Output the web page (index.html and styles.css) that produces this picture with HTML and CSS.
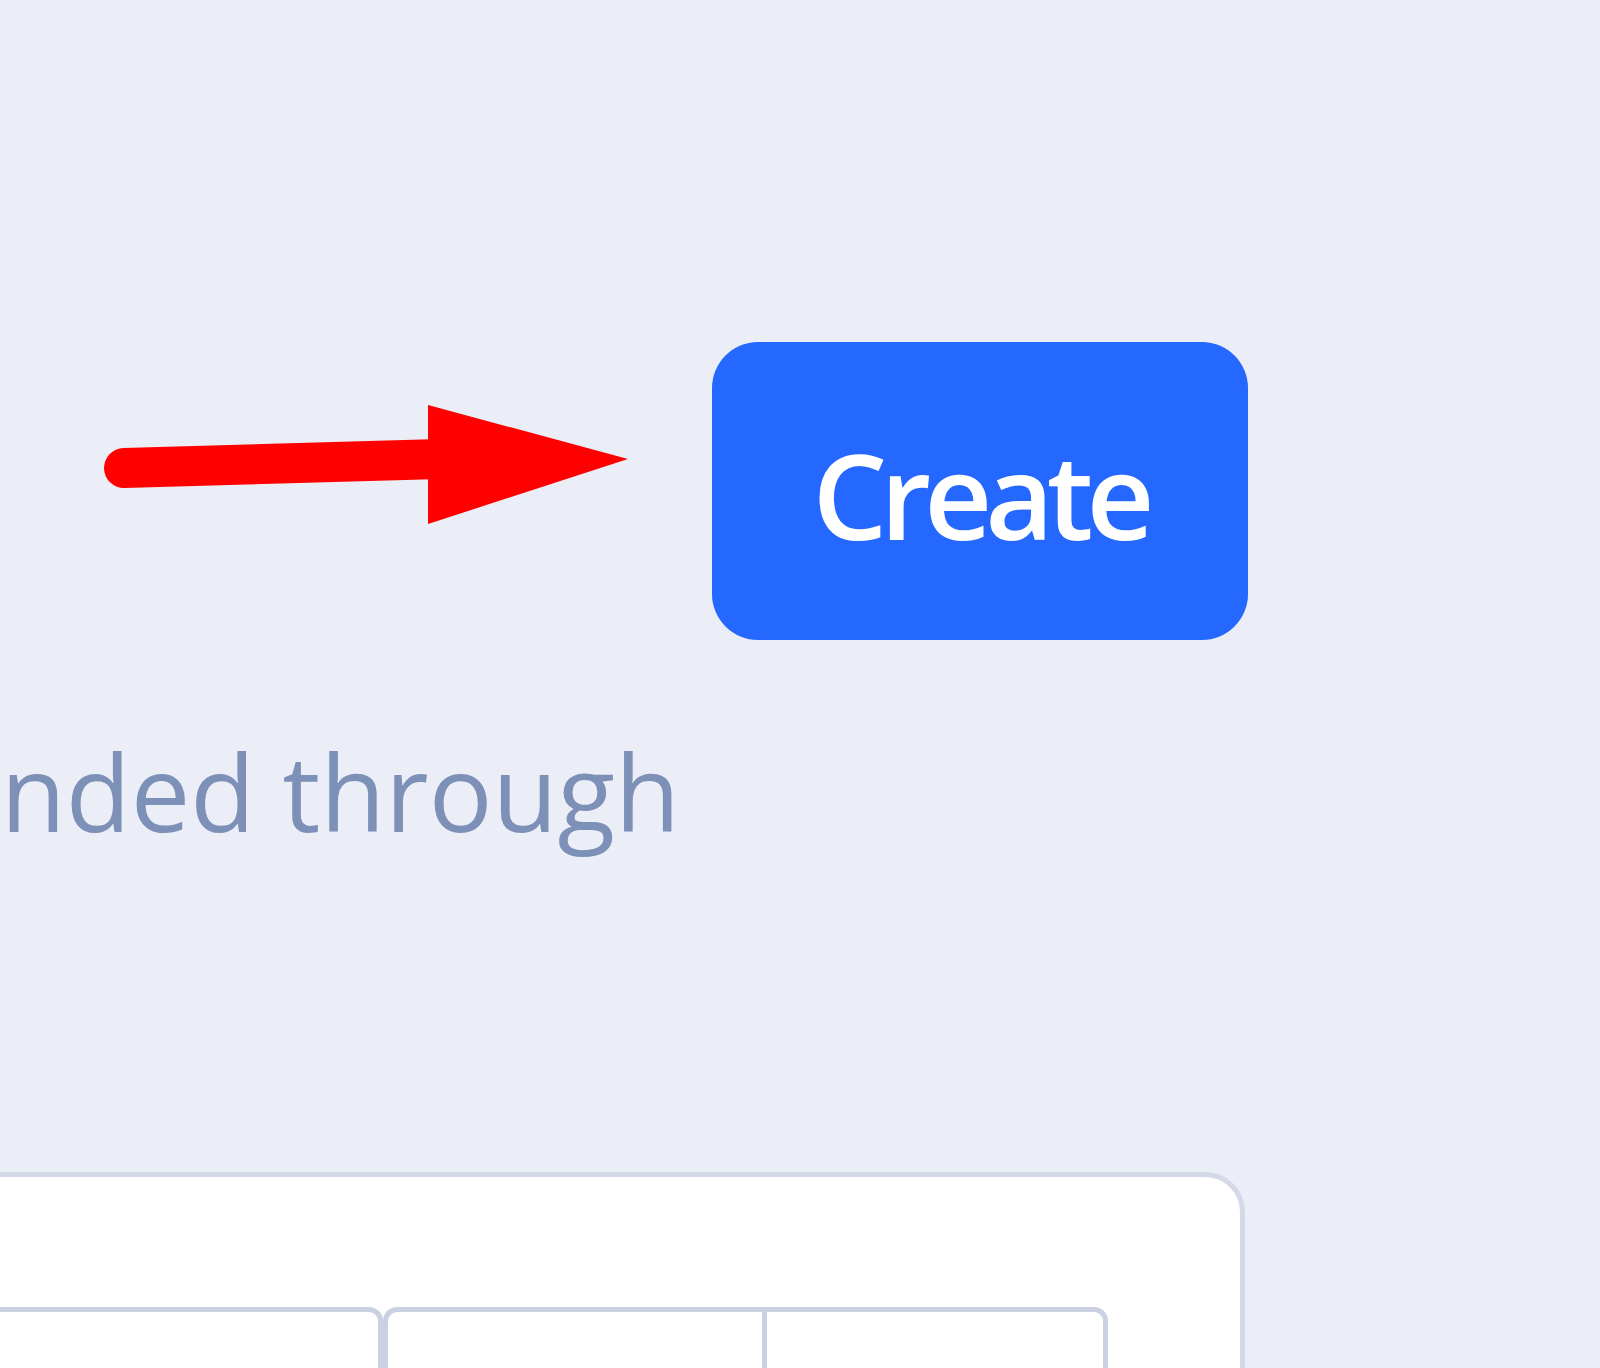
FILE: index.html
```html
<!DOCTYPE html>
<html lang="en">
<head>
<meta charset="utf-8">
<title>Create</title>
<link rel="stylesheet" href="styles.css">
</head>
<body>
<div class="page">
  <div class="top-row">
    <svg class="arrow" width="712" height="298" viewBox="0 0 712 298" aria-hidden="true">
      <line x1="124" y1="126" x2="440" y2="117" stroke="#ff0000" stroke-width="40" stroke-linecap="round"/>
      <polygon points="428,63 628,117 428,182" fill="#ff0000"/>
    </svg>
    <button class="btn-create" type="button">Create</button>
  </div>
  <div class="lead"><span>nded through</span></div>
  <div class="card">
    <div class="field-group">
      <div class="field field-first"></div>
      <div class="field field-split">
        <div class="cell"></div>
        <div class="cell cell-last"></div>
      </div>
    </div>
  </div>
</div>
</body>
</html>
```

FILE: styles.css
```css
html, body {
  margin: 0;
  padding: 0;
}
body {
  width: 1600px;
  height: 1368px;
  overflow: hidden;
  background: #ebeef6;
  font-family: "Open Sans", "Noto Sans", sans-serif;
}
.page {
  width: 1248px;
  display: flex;
  flex-direction: column;
}
.top-row {
  margin-top: 342px;
  height: 298px;
  display: flex;
  align-items: center;
}
.arrow {
  display: block;
  flex: none;
}
.btn-create {
  width: 536px;
  height: 298px;
  flex: none;
  border: none;
  border-radius: 46px;
  background: #2468ff;
  color: #ffffff;
  font-family: "Open Sans", "Noto Sans", sans-serif;
  font-weight: 600;
  font-size: 118px;
  letter-spacing: -7px;
  line-height: 1;
  padding: 8px 0 0 0;
  display: flex;
  align-items: center;
  justify-content: center;
}
.lead {
  margin-top: 79px;
  width: 680px;
  height: 144px;
  display: flex;
  justify-content: flex-end;
  font-size: 106px;
  line-height: 144px;
  color: #7d90b8;
  white-space: nowrap;
}
.card {
  margin-top: 309px;
  margin-left: -60px;
  margin-right: 3px;
  height: 400px;
  background: #ffffff;
  border: 5px solid #d3d9e6;
  border-radius: 40px;
  padding-top: 130px;
  box-sizing: border-box;
}
.field-group {
  display: flex;
}
.field {
  height: 200px;
  box-sizing: border-box;
  border: 5px solid #c9d1e3;
  border-radius: 14px;
  background: #ffffff;
}
.field-first {
  width: 438px;
}
.field-split {
  width: 725px;
  display: flex;
}
.cell {
  width: 374px;
  border-right: 5px solid #c9d1e3;
}
.cell-last {
  flex: 1;
  border-right: none;
}
```
